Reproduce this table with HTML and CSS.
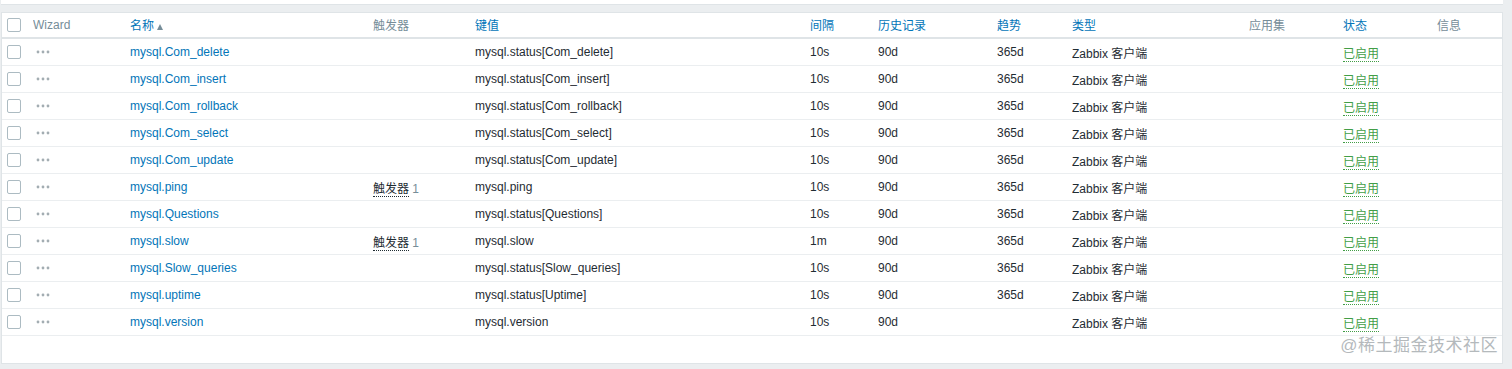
FILE: index.html
```html
<!DOCTYPE html>
<html lang="zh">
<head>
<meta charset="utf-8">
<title>Items</title>
<link rel="stylesheet" href="styles.css">
</head>
<body>
<div class="topstrip"></div>
<div class="panel">
  <table class="list">
    <colgroup>
      <col class="c-check"><col class="c-wiz"><col class="c-name"><col class="c-trig"><col class="c-key"><col class="c-int"><col class="c-hist"><col class="c-trend"><col class="c-type"><col class="c-app"><col class="c-status"><col class="c-info">
    </colgroup>
    <thead>
      <tr>
        <th class="first"><span class="cb"></span></th>
        <th>Wizard</th>
        <th><a class="lnk">名称</a><span class="arrow"></span></th>
        <th>触发器</th>
        <th><a class="lnk">键值</a></th>
        <th><a class="lnk">间隔</a></th>
        <th><a class="lnk">历史记录</a></th>
        <th><a class="lnk">趋势</a></th>
        <th><a class="lnk">类型</a></th>
        <th>应用集</th>
        <th><a class="lnk">状态</a></th>
        <th>信息</th>
      </tr>
    </thead>
    <tbody>
      <tr><td class="first"><span class="cb"></span></td><td><svg class="dots" width="14" height="4" viewBox="0 0 14 4"><circle cx="2" cy="2" r="1.4"/><circle cx="7" cy="2" r="1.4"/><circle cx="12" cy="2" r="1.4"/></svg></td><td><a class="lnk">mysql.Com_delete</a></td><td></td><td>mysql.status[Com_delete]</td><td>10s</td><td>90d</td><td>365d</td><td>Zabbix 客户端</td><td></td><td><span class="ok">已启用</span></td><td></td></tr>
      <tr><td class="first"><span class="cb"></span></td><td><svg class="dots" width="14" height="4" viewBox="0 0 14 4"><circle cx="2" cy="2" r="1.4"/><circle cx="7" cy="2" r="1.4"/><circle cx="12" cy="2" r="1.4"/></svg></td><td><a class="lnk">mysql.Com_insert</a></td><td></td><td>mysql.status[Com_insert]</td><td>10s</td><td>90d</td><td>365d</td><td>Zabbix 客户端</td><td></td><td><span class="ok">已启用</span></td><td></td></tr>
      <tr><td class="first"><span class="cb"></span></td><td><svg class="dots" width="14" height="4" viewBox="0 0 14 4"><circle cx="2" cy="2" r="1.4"/><circle cx="7" cy="2" r="1.4"/><circle cx="12" cy="2" r="1.4"/></svg></td><td><a class="lnk">mysql.Com_rollback</a></td><td></td><td>mysql.status[Com_rollback]</td><td>10s</td><td>90d</td><td>365d</td><td>Zabbix 客户端</td><td></td><td><span class="ok">已启用</span></td><td></td></tr>
      <tr><td class="first"><span class="cb"></span></td><td><svg class="dots" width="14" height="4" viewBox="0 0 14 4"><circle cx="2" cy="2" r="1.4"/><circle cx="7" cy="2" r="1.4"/><circle cx="12" cy="2" r="1.4"/></svg></td><td><a class="lnk">mysql.Com_select</a></td><td></td><td>mysql.status[Com_select]</td><td>10s</td><td>90d</td><td>365d</td><td>Zabbix 客户端</td><td></td><td><span class="ok">已启用</span></td><td></td></tr>
      <tr><td class="first"><span class="cb"></span></td><td><svg class="dots" width="14" height="4" viewBox="0 0 14 4"><circle cx="2" cy="2" r="1.4"/><circle cx="7" cy="2" r="1.4"/><circle cx="12" cy="2" r="1.4"/></svg></td><td><a class="lnk">mysql.Com_update</a></td><td></td><td>mysql.status[Com_update]</td><td>10s</td><td>90d</td><td>365d</td><td>Zabbix 客户端</td><td></td><td><span class="ok">已启用</span></td><td></td></tr>
      <tr><td class="first"><span class="cb"></span></td><td><svg class="dots" width="14" height="4" viewBox="0 0 14 4"><circle cx="2" cy="2" r="1.4"/><circle cx="7" cy="2" r="1.4"/><circle cx="12" cy="2" r="1.4"/></svg></td><td><a class="lnk">mysql.ping</a></td><td><span class="trig">触发器</span> <span class="cnt">1</span></td><td>mysql.ping</td><td>10s</td><td>90d</td><td>365d</td><td>Zabbix 客户端</td><td></td><td><span class="ok">已启用</span></td><td></td></tr>
      <tr><td class="first"><span class="cb"></span></td><td><svg class="dots" width="14" height="4" viewBox="0 0 14 4"><circle cx="2" cy="2" r="1.4"/><circle cx="7" cy="2" r="1.4"/><circle cx="12" cy="2" r="1.4"/></svg></td><td><a class="lnk">mysql.Questions</a></td><td></td><td>mysql.status[Questions]</td><td>10s</td><td>90d</td><td>365d</td><td>Zabbix 客户端</td><td></td><td><span class="ok">已启用</span></td><td></td></tr>
      <tr><td class="first"><span class="cb"></span></td><td><svg class="dots" width="14" height="4" viewBox="0 0 14 4"><circle cx="2" cy="2" r="1.4"/><circle cx="7" cy="2" r="1.4"/><circle cx="12" cy="2" r="1.4"/></svg></td><td><a class="lnk">mysql.slow</a></td><td><span class="trig">触发器</span> <span class="cnt">1</span></td><td>mysql.slow</td><td>1m</td><td>90d</td><td>365d</td><td>Zabbix 客户端</td><td></td><td><span class="ok">已启用</span></td><td></td></tr>
      <tr><td class="first"><span class="cb"></span></td><td><svg class="dots" width="14" height="4" viewBox="0 0 14 4"><circle cx="2" cy="2" r="1.4"/><circle cx="7" cy="2" r="1.4"/><circle cx="12" cy="2" r="1.4"/></svg></td><td><a class="lnk">mysql.Slow_queries</a></td><td></td><td>mysql.status[Slow_queries]</td><td>10s</td><td>90d</td><td>365d</td><td>Zabbix 客户端</td><td></td><td><span class="ok">已启用</span></td><td></td></tr>
      <tr><td class="first"><span class="cb"></span></td><td><svg class="dots" width="14" height="4" viewBox="0 0 14 4"><circle cx="2" cy="2" r="1.4"/><circle cx="7" cy="2" r="1.4"/><circle cx="12" cy="2" r="1.4"/></svg></td><td><a class="lnk">mysql.uptime</a></td><td></td><td>mysql.status[Uptime]</td><td>10s</td><td>90d</td><td>365d</td><td>Zabbix 客户端</td><td></td><td><span class="ok">已启用</span></td><td></td></tr>
      <tr><td class="first"><span class="cb"></span></td><td><svg class="dots" width="14" height="4" viewBox="0 0 14 4"><circle cx="2" cy="2" r="1.4"/><circle cx="7" cy="2" r="1.4"/><circle cx="12" cy="2" r="1.4"/></svg></td><td><a class="lnk">mysql.version</a></td><td></td><td>mysql.version</td><td>10s</td><td>90d</td><td></td><td>Zabbix 客户端</td><td></td><td><span class="ok">已启用</span></td><td></td></tr>
    </tbody>
  </table>
  <div class="watermark">@稀土掘金技术社区</div>
</div>
</body>
</html>
```
FILE: styles.css
```css
html, body {
  margin: 0;
  padding: 0;
  background: #ebeef0;
  font-family: Arial, "Liberation Sans", "Noto Sans CJK SC", sans-serif;
  font-size: 12px;
  color: #1f2c33;
}
.topstrip {
  height: 4px;
  width: 1502px;
  margin-left: 1px;
  background: #fff;
  border-bottom: 1px solid #dfe4e7;
}
.panel {
  position: relative;
  margin: 7px 0 0 1px;
  width: 1500px;
  height: 350px;
  background: #fff;
  border: 1px solid #dfe4e7;
}
.list {
  width: 1500px;
  border-collapse: collapse;
  table-layout: fixed;
}
.c-check { width: 31px; }
.c-wiz { width: 97px; }
.c-name { width: 243px; }
.c-trig { width: 102px; }
.c-key { width: 335px; }
.c-int { width: 68px; }
.c-hist { width: 119px; }
.c-trend { width: 75px; }
.c-type { width: 177px; }
.c-app { width: 94px; }
.c-status { width: 94px; }
.c-info { width: 65px; }
.list th, .list td {
  padding: 0;
  text-align: left;
  white-space: nowrap;
  vertical-align: middle;
  overflow: hidden;
}
.list th {
  height: 23px;
  padding-bottom: 1px;
  font-weight: normal;
  color: #768d99;
  border-bottom: 2px solid #dfe4e7;
}
.list td {
  height: 26px;
  border-bottom: 1px solid #ebeef0;
}
.list .first { padding-left: 5px; }
.cb {
  display: block;
  width: 12px;
  height: 12px;
  border: 1px solid #acbbc2;
  border-radius: 2px;
  background: #fff;
}
.lnk {
  color: #0275b8;
  text-decoration: none;
}
.arrow {
  display: inline-block;
  margin-left: 3px;
  width: 0;
  height: 0;
  border-left: 3.5px solid transparent;
  border-right: 3.5px solid transparent;
  border-bottom: 6px solid #768d99;
  vertical-align: 0px;
}
.dots {
  display: block;
  margin-left: 3px;
  fill: #a3adb2;
}
.trig {
  color: #1f2c33;
  border-bottom: 1px dotted #1f2c33;
}
.cnt { color: #768d99; }
.ok {
  color: #429e47;
  border-bottom: 1px dotted #429e47;
}
.watermark {
  position: absolute;
  right: 4px;
  bottom: 7px;
  font-size: 17px;
  letter-spacing: 0.5px;
  color: #b4b9bc;
  text-shadow: 0 0 1px #fff;
}
```
